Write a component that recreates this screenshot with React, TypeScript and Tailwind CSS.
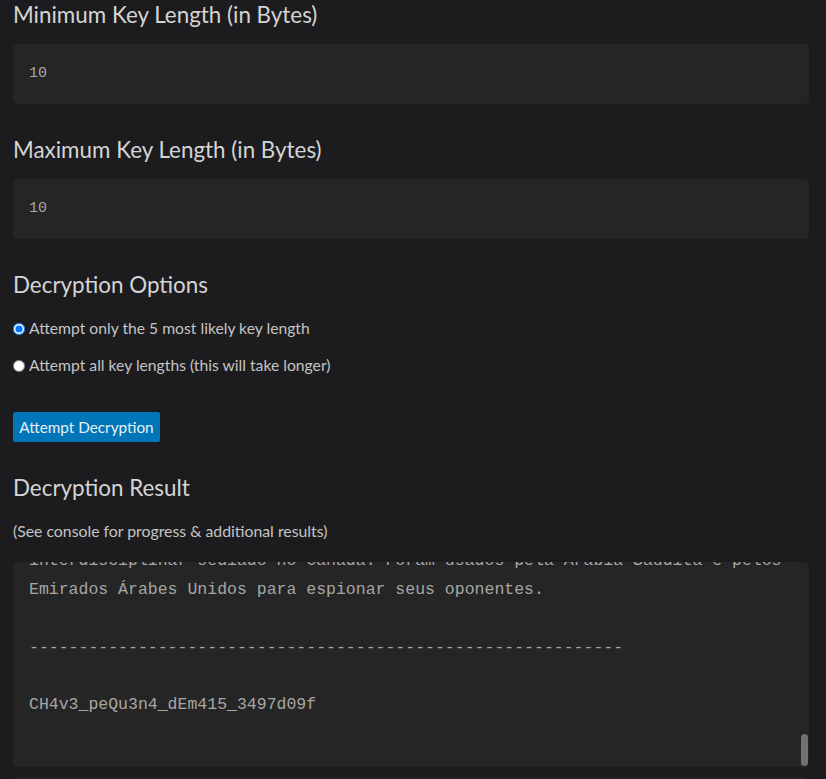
import React from 'react'

const heading = "block h-[30px] leading-[30px] text-[22.4px] text-[#d4d4d4] font-['Lato',sans-serif]"
const inputBox = "h-[60px] rounded-[5px] bg-[#252525] flex items-center px-[16px] font-['Liberation_Mono',monospace] text-[15px] text-[#a8a8a8]"

const lines = [
    'interdisciplinar sediado no Canadá. Foram usados pela Arábia Saudita e pelos',
    'Emirados Árabes Unidos para espionar seus oponentes.',
    '',
    '-'.repeat(60),
    '',
    'CH4v3_peQu3n4_dEm415_3497d09f',
    '',
    '',
]

const App = () => {
    return (
        <div className="min-h-[779px] bg-[#1c1c1e] overflow-hidden">
            <div className="w-[796px] ml-[13px] font-['Lato',sans-serif]">
                <span className={heading}>Minimum Key Length (in Bytes)</span>
                <div className={inputBox + " mt-[14px]"}>10</div>

                <span className={heading + " mt-[31px]"}>Maximum Key Length (in Bytes)</span>
                <div className={inputBox + " mt-[14px]"}>10</div>

                <span className={heading + " mt-[31px]"}>Decryption Options</span>
                <label className="mt-[17px] flex items-center h-[24px] text-[15.7px] text-[#c4c4c4]">
                    <input type="radio" name="opt" defaultChecked className="m-0 mr-[4px] w-[12px] h-[12px]" />
                    Attempt only the 5 most likely key length
                </label>
                <label className="mt-[13px] flex items-center h-[24px] text-[15.7px] text-[#c4c4c4]">
                    <input type="radio" name="opt" className="m-0 mr-[4px] w-[12px] h-[12px]" />
                    Attempt all key lengths (this will take longer)
                </label>

                <button className="mt-[34px] h-[30px] w-[147px] rounded-[2px] bg-[#0076b8] text-[15.3px] text-[#e8eef3] flex items-center justify-center">
                    Attempt Decryption
                </button>

                <span className={heading + " mt-[31px]"}>Decryption Result</span>
                <p className="mt-[16px] h-[24px] leading-[24px] text-[15.8px] text-[#c4c4c4]">
                    (See console for progress &amp; additional results)
                </p>

                <div className="relative mt-[19px] h-[205px] rounded-[5px] bg-[#252525] overflow-hidden">
                    <div className="mt-[-15px] px-[16px] font-['Liberation_Mono',monospace] text-[16.5px] leading-[28.9px] text-[#a6a6a6] whitespace-pre">
                        {lines.map((l, i) => (
                            <div key={i} className="h-[28.9px]">{l}</div>
                        ))}
                    </div>
                    <div className="absolute right-[1px] bottom-[1px] w-[7px] h-[32px] rounded-full bg-[#717171]" />
                </div>

                <div className="mt-[10px] h-[40px] w-[792px] rounded-[5px] bg-[#262626]" />
            </div>
        </div>
    )
}

export default App
